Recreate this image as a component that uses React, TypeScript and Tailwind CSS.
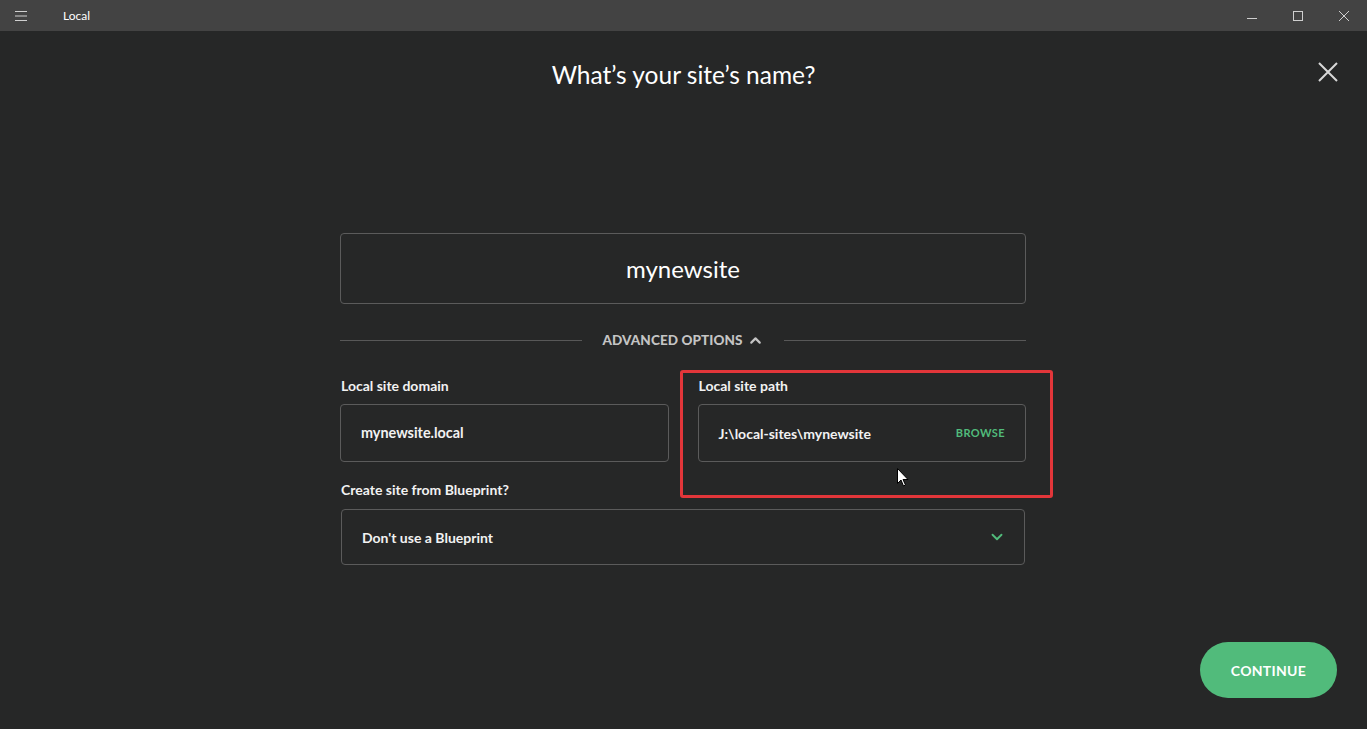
import { ChevronDown, ChevronUp } from "lucide-react";

const fontStack = { fontFamily: "Lato, 'Open Sans', sans-serif" };

const App = () => {
  return (
    <div
      className="flex h-[729px] w-[1367px] flex-col overflow-hidden bg-[#262727] text-white"
      style={fontStack}
    >
      {/* title bar */}
      <div className="flex h-[31px] shrink-0 items-center bg-[#434343]">
        <div className="flex w-[42px] justify-center">
          <svg viewBox="0 0 12 10" className="h-[10px] w-[12px] stroke-[#d0d0d0]" strokeWidth="1">
            <path d="M0 0.5h12M0 5h12M0 9.5h12" />
          </svg>
        </div>
        <span className="ml-[21px] text-[12px] text-white">Local</span>
        <div className="ml-auto flex h-full items-center">
          <div className="flex h-full w-[46px] items-center justify-center">
            <svg viewBox="0 0 10 10" className="h-[10px] w-[10px] stroke-[#cfcfcf]" strokeWidth="1">
              <path d="M0 7.5h10" />
            </svg>
          </div>
          <div className="flex h-full w-[46px] items-center justify-center">
            <svg viewBox="0 0 10 10" className="h-[10px] w-[10px] fill-none stroke-[#cfcfcf]" strokeWidth="1">
              <rect x="0.5" y="0.5" width="9" height="9" />
            </svg>
          </div>
          <div className="flex h-full w-[46px] items-center justify-center">
            <svg viewBox="0 0 10 10" className="h-[10px] w-[10px] stroke-[#cfcfcf]" strokeWidth="1">
              <path d="M0 0l10 10M10 0L0 10" />
            </svg>
          </div>
        </div>
      </div>

      {/* body */}
      <div className="relative flex flex-1 flex-col">
        <button className="absolute right-[29px] top-[31px] text-[#d8d8d8]" aria-label="close">
          <svg viewBox="0 0 20 20" className="h-[20px] w-[20px] stroke-current" strokeWidth="2">
            <path d="M1 1l18 18M19 1L1 19" />
          </svg>
        </button>

        <h1 className="mt-[28px] text-center text-[24.5px] leading-[32px] font-normal text-white">
          What’s your site’s name?
        </h1>

        <div className="ml-[340px] mt-[142px] w-[686px]">
          <div className="flex h-[71px] items-center justify-center rounded-[4px] border border-[#5b5b5b] text-[24px] text-white">
            mynewsite
          </div>

          <div className="mt-[26px] flex h-[20px] items-center">
            <div className="h-px flex-1 bg-[#585858]" />
            <div className="flex items-center gap-[4px] px-[20px] text-[13.5px] font-black tracking-[0.1px] text-[#c4c4c4]">
              ADVANCED OPTIONS
              <ChevronUp size={17} strokeWidth={3} />
            </div>
            <div className="h-px flex-1 bg-[#585858]" />
          </div>

          <div className="mt-[27px] grid grid-cols-2 gap-[29px]">
            <div>
              <div className="pl-px text-[14px] leading-[18px] font-bold text-[#f2f2f2]">
                Local site domain
              </div>
              <div className="mt-[9px] flex h-[58px] items-center rounded-[4px] border border-[#5b5b5b] px-[20px] text-[14.4px] font-bold text-[#f2f2f2]">
                mynewsite.local
              </div>
            </div>
            <div className="relative">
              <div className="pl-px text-[14px] leading-[18px] font-bold text-[#f2f2f2]">
                Local site path
              </div>
              <div className="mt-[9px] flex h-[58px] items-center justify-between rounded-[4px] border border-[#5b5b5b] pl-[20px] pr-[20px] text-[14px] font-bold text-[#f2f2f2]">
                <span>J:\local-sites\mynewsite</span>
                <span className="text-[11px] tracking-[0.4px] text-[#51bb7b]">BROWSE</span>
              </div>
              <div className="pointer-events-none absolute -bottom-[36px] -left-[18px] -right-[27px] -top-[7px] rounded-[3px] border-[3px] border-[#e2363a]" />
              <svg
                viewBox="0 0 12 19"
                className="pointer-events-none absolute left-[199px] top-[91px] h-[19px] w-[12px]"
              >
                <path
                  d="M0.5 0.5v15l3.5-3.5 2.5 6 2-1-2.5-5.5h5z"
                  fill="#ffffff"
                  stroke="#000000"
                  strokeWidth="1"
                />
              </svg>
            </div>
          </div>

          <div className="mt-[19px] pl-px text-[14px] leading-[18px] font-bold text-[#f2f2f2]">
            Create site from Blueprint?
          </div>
          <div className="mx-px mt-[10px] flex h-[56px] items-center justify-between rounded-[4px] border border-[#5b5b5b] pl-[20px] pr-[18px] text-[14px] font-bold text-[#f2f2f2]">
            <span>Don't use a Blueprint</span>
            <ChevronDown size={18} strokeWidth={2.5} className="text-[#51bb7b]" />
          </div>
        </div>

        <div className="mt-auto flex justify-end pb-[31px] pr-[30px]">
          <button className="flex h-[56px] w-[137px] items-center justify-center rounded-full bg-[#51bb7b] text-[14px] font-bold tracking-[0.3px] text-white">
            CONTINUE
          </button>
        </div>
      </div>
    </div>
  );
};

export default App;
